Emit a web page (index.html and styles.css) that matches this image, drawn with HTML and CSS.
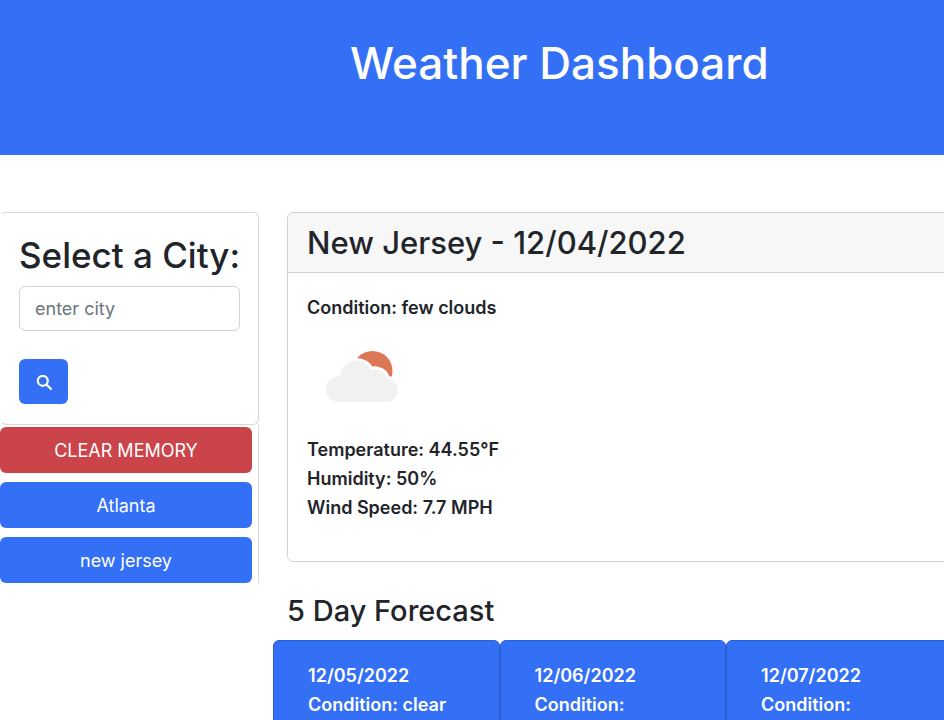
FILE: index.html
```html
<!DOCTYPE html>
<html lang="en">
<head>
    <meta charset="UTF-8">
    <meta name="viewport" content="width=device-width, initial-scale=1.0">
    <title>Weather Dashboard</title>
    <link rel="stylesheet" href="styles.css">
</head>
<body>
    <header class="banner">
        <h1>Weather Dashboard</h1>
    </header>
    <div class="page">
        <aside class="sidebar">
            <form class="search-card">
                <h2>Select a City:</h2>
                <input class="city-input" type="text" placeholder="enter city">
                <button class="search-btn" type="button" aria-label="search">
                    <svg width="16" height="16" viewBox="0 0 16 16" fill="none" stroke="#fff" stroke-width="2.2">
                        <circle cx="6.8" cy="6.8" r="5"/>
                        <path d="M10.6 10.6 15 15" stroke-linecap="round"/>
                    </svg>
                </button>
            </form>
            <div class="history">
                <button class="btn btn-red" type="button">CLEAR MEMORY</button>
                <button class="btn" type="button">Atlanta</button>
                <button class="btn" type="button">new jersey</button>
            </div>
        </aside>
        <main class="content">
            <section class="today">
                <div class="today-head">New Jersey - 12/04/2022</div>
                <div class="today-body">
                    <p>Condition: few clouds</p>
                    <svg class="weather-icon" width="100" height="100" viewBox="0 0 100 100">
                        <circle cx="60.500" cy="44" r="20" fill="#dd7654"/>
                        <path d="M12 75c-9 0-13-7-13-13 0-8 6-13 14-13 1-9 8-15 16-15 7 0 12 3 15 9 3-1 5-1 7 0 5 1 8 5 9 9 6 0 11 5 11 11 0 7-5 12-11 12z" fill="#fff" stroke="#fff" stroke-width="6" transform="translate(15 0)"/>
                        <path d="M12 75c-9 0-13-7-13-13 0-8 6-13 14-13 1-9 8-15 16-15 7 0 12 3 15 9 3-1 5-1 7 0 5 1 8 5 9 9 6 0 11 5 11 11 0 7-5 12-11 12z" fill="#f1f1f0" transform="translate(15 0)"/>
                    </svg>
                    <p>Temperature: 44.55°F</p>
                    <p>Humidity: 50%</p>
                    <p>Wind Speed: 7.7 MPH</p>
                </div>
            </section>
            <h3 class="forecast-title">5 Day Forecast</h3>
            <div class="forecast">
                <div class="day-card">
                    <p>12/05/2022</p>
                    <p>Condition: clear</p>
                </div>
                <div class="day-card">
                    <p>12/06/2022</p>
                    <p>Condition:</p>
                </div>
                <div class="day-card">
                    <p>12/07/2022</p>
                    <p>Condition:</p>
                </div>
            </div>
        </main>
    </div>
</body>
</html>
```

FILE: styles.css
```css
* {
    box-sizing: border-box;
}

html, body {
    height: 720px;
    overflow: hidden;
}

body {
    margin: 0;
    background-color: #fff;
    color: #212529;
    font-family: Inter, "Liberation Sans", sans-serif;
    font-size: 18px;
}

p {
    margin: 0;
}

.banner {
    height: 155px;
    padding: 34px 0 0 350px;
    background-color: #3370f6;
    color: #fff;
}

.banner h1 {
    margin: 0;
    font-size: 44px;
    font-weight: 500;
    line-height: 58px;
    white-space: nowrap;
}

.page {
    display: flex;
    gap: 28px;
    width: 1200px;
    padding-top: 57px;
}

.sidebar {
    flex: 0 0 254px;
}

.search-card {
    height: 213px;
    padding: 20px 18px 0;
    border: 1px solid #d9d9d9;
    border-radius: 6px;
    border-left-color: transparent;
}

.search-card h2 {
    margin: 0 0 9px;
    font-size: 35px;
    font-weight: 500;
    line-height: 44px;
    white-space: nowrap;
}

.city-input {
    display: block;
    width: 100%;
    height: 45px;
    padding: 0 15px;
    border: 1px solid #ced4da;
    border-radius: 6px;
    color: #212529;
    font: inherit;
}

.city-input::placeholder {
    color: #6c757d;
}

.search-btn {
    display: flex;
    align-items: center;
    justify-content: center;
    width: 49px;
    height: 45px;
    margin-top: 28px;
    border: 0;
    border-radius: 6px;
    background-color: #3370f6;
}

.history {
    display: flex;
    flex-direction: column;
    gap: 9px;
    padding: 2px 0 0;
    border-right: 1px solid #d9d9d9;
}

.btn {
    width: 252px;
    height: 46px;
    border: 0;
    border-radius: 6px;
    background-color: #3370f6;
    color: #fff;
    font: inherit;
}

.btn-red {
    background-color: #cb444a;
}

.content {
    flex: 1;
}

.today {
    height: 350px;
    border: 1px solid #d2d2d2;
    border-radius: 6px;
}

.today-head {
    height: 60px;
    padding-left: 19px;
    border-bottom: 1px solid #d2d2d2;
    border-radius: 6px 6px 0 0;
    background-color: #f7f7f7;
    font-size: 31px;
    font-weight: 500;
    line-height: 59px;
}

.today-body {
    padding: 20px 19px;
    font-weight: 600;
    line-height: 29px;
}

.weather-icon {
    display: block;
    margin: 5px 0 8px 5px;
}

.forecast-title {
    margin: 29px 0 9px;
    font-size: 29px;
    font-weight: 500;
    line-height: 40px;
}

.forecast {
    display: flex;
    margin-left: -14px;
}

.day-card {
    flex: 0 0 226.500px;
    height: 200px;
    padding: 20px 34px;
    border: 1px solid #2a5fd0;
    border-radius: 6px;
    background-color: #3370f6;
    color: #fff;
    font-weight: 600;
    line-height: 29px;
}
```
